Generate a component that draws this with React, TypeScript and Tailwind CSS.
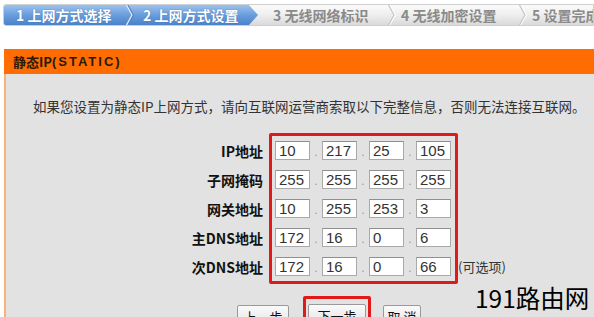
import React from "react";

const cjk = "font-['Noto_Sans_CJK_SC','Noto_Sans',sans-serif]";

function Chevron({ color, shade }: { color: string; shade: string }) {
  return (
    <svg width="10" height="22" viewBox="0 0 10 22" className="shrink-0">
      <polyline points="2,0 8,11 2,22" fill="none" stroke={shade} strokeWidth="1.6" />
      <polyline points="1,0 7,11 1,22" fill="none" stroke={color} strokeWidth="1.2" />
    </svg>
  );
}

function IpRow({ vals }: { vals: string[] }) {
  return (
    <div className="h-[29px] flex items-center">
      {vals.map((v, i) => (
        <React.Fragment key={i}>
          {i > 0 && (
            <div className="w-[12px] h-[19px] flex items-end justify-center pb-[2px] text-[#9a9a9a] text-[12px] leading-none font-['Liberation_Sans',sans-serif]">
              .
            </div>
          )}
          <div className="w-[35px] h-[19px] bg-white border border-[#a9a9a9] border-t-[#8f8f8f] pl-[3px] flex items-center text-[15px] leading-none text-[#333] font-['Liberation_Sans',sans-serif]">
            {v}
          </div>
        </React.Fragment>
      ))}
    </div>
  );
}

const labels = ["IP地址", "子网掩码", "网关地址", "主DNS地址", "次DNS地址"];
const rows = [
  ["10", "217", "25", "105"],
  ["255", "255", "255", "255"],
  ["10", "255", "253", "3"],
  ["172", "16", "0", "6"],
  ["172", "16", "0", "66"],
];

export default function App() {
  return (
    <div className={`relative w-[594px] h-[317px] overflow-hidden bg-white ${cjk}`}>
      {/* Step bar */}
      <div className="pt-[4px] pl-[3px]">
        <div className="h-[22px] flex rounded-l-[3px] border border-[#cfcfcf] bg-gradient-to-b from-[#fbfbfb] via-[#eeeeee] to-[#dadada] overflow-hidden">
          <div className="shrink-0 w-[254px] h-full flex items-center pl-[12px] bg-gradient-to-b from-[#9cc2ee] via-[#6a9ddc] to-[#4a82c9] [clip-path:polygon(0_0,calc(100%-9px)_0,100%_50%,calc(100%-9px)_100%,0_100%)]">
            <span className="shrink-0 w-[109px] text-white font-bold text-[14px] leading-none whitespace-nowrap [text-shadow:0_0_1px_#2d5f9e]">
              1 上网方式选择
            </span>
            <Chevron color="#e8f0fb" shade="#4f7fbf" />
            <span className="ml-[8px] text-white font-bold text-[14px] leading-none whitespace-nowrap [text-shadow:0_0_1px_#2d5f9e]">
              2 上网方式设置
            </span>
          </div>
          <div className="shrink-0 flex items-center pl-[15px] text-[#8a8a8a] font-bold text-[14px] leading-none whitespace-nowrap">
            <span className="shrink-0 w-[114px]">3 无线网络标识</span>
            <Chevron color="#c4c4c4" shade="#ffffff" />
            <span className="shrink-0 ml-[4px] w-[117px]">4 无线加密设置</span>
            <Chevron color="#c4c4c4" shade="#ffffff" />
            <span className="shrink-0 ml-[4px]">5 设置完成</span>
          </div>
        </div>
      </div>

      {/* Panel */}
      <div className="mt-[23px] ml-[4px]">
        <div className="h-[25px] bg-[#ff6c02] flex items-center pl-[9px] text-[13px] font-bold text-[#2a1a0a] leading-none">
          静态IP<span className="tracking-[2px] font-['Liberation_Sans',sans-serif]">(STATIC)</span>
        </div>
        <div className="h-[300px] bg-[#e2e2e2] border-l-2 border-[#f9b07a]">
          <div className="pt-[24px] pl-[27px] text-[13.5px] leading-[16px] text-[#333] whitespace-nowrap">
            如果您设置为静态IP上网方式，请向互联网运营商索取以下完整信息，否则无法连接互联网。
          </div>

          <div className="flex mt-[19px]">
            <div className="w-[258px] pt-[3px] flex flex-col items-end pr-[1px]">
              {labels.map((l) => (
                <div key={l} className="h-[29px] flex items-center text-[14px] font-bold text-[#111] leading-none">
                  {l}
                </div>
              ))}
            </div>
            <div className="ml-[5px] border-[3px] border-[#e11919] rounded-[2px] pl-[3px] pr-[4px]">
              {rows.map((r, i) => (
                <IpRow key={i} vals={r} />
              ))}
            </div>
            <div className="flex flex-col justify-end pb-[3px]">
              <div className="h-[29px] flex items-center text-[13px] text-[#333] leading-none">(可选项)</div>
            </div>
          </div>

          <div className="flex items-start mt-[12px] ml-[231px]">
            <div className="mt-[9px] w-[52px] h-[22px] border border-[#9a9a9a] rounded-[2px] bg-gradient-to-b from-[#fafafa] to-[#e4e4e4] flex items-center justify-center text-[13px] text-[#111] leading-none">
              上一步
            </div>
            <div className="ml-[14px] border-[3px] border-[#e11919] rounded-[2px] px-[2px] pt-[5px]">
              <div className="w-[58px] h-[22px] border border-[#9a9a9a] rounded-[2px] bg-gradient-to-b from-[#fafafa] to-[#e4e4e4] flex items-center justify-center text-[13px] text-[#111] leading-none">
                下一步
              </div>
            </div>
            <div className="ml-[12px] mt-[9px] w-[38px] h-[22px] border border-[#9a9a9a] rounded-[2px] bg-gradient-to-b from-[#fafafa] to-[#e4e4e4] flex items-center justify-center text-[13px] text-[#111] leading-none">
              取 消
            </div>
          </div>
        </div>
      </div>

      <div className="absolute left-[475px] top-[286px] text-[24.5px] leading-none text-black">191路由网</div>
    </div>
  );
}
